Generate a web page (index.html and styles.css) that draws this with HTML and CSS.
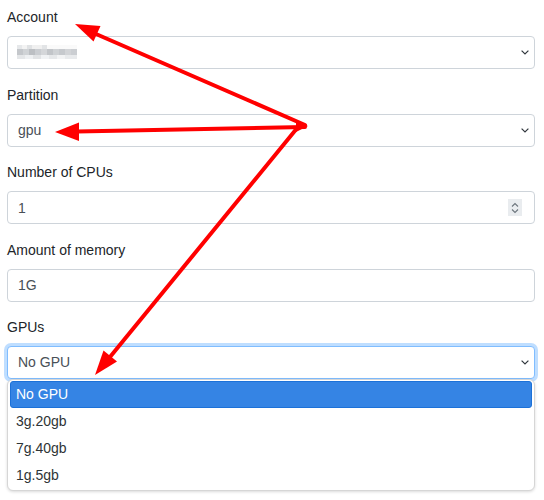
FILE: index.html
```html
<!DOCTYPE html>
<html lang="en">
<head>
    <meta charset="UTF-8">
    <meta name="viewport" content="width=device-width, initial-scale=1.0">
    <title>Job resources</title>
    <link rel="stylesheet" href="styles.css">
</head>
<body>
    <form class="job-form">
        <div class="form-group">
            <label for="account">Account</label>
            <div class="select-wrap">
                <select id="account" class="form-control">
                    <option value=""></option>
                </select>
                <!-- account name is blurred out -->
                <div class="redact"></div>
            </div>
        </div>

        <div class="form-group">
            <label for="partition">Partition</label>
            <select id="partition" class="form-control">
                <option>gpu</option>
            </select>
        </div>

        <div class="form-group">
            <label for="cpus">Number of CPUs</label>
            <div class="number-wrap">
                <input type="text" id="cpus" class="form-control" value="1">
                <span class="spinner">
                    <svg width="8" height="14" viewBox="0 0 8 14">
                        <path d="M1 5.5 4 2.5 7 5.5M1 8.5 4 11.5 7 8.5" fill="none" stroke="#6c757d" stroke-width="1.1"/>
                    </svg>
                </span>
            </div>
        </div>

        <div class="form-group">
            <label for="memory">Amount of memory</label>
            <input type="text" id="memory" class="form-control" value="1G">
        </div>

        <div class="form-group">
            <label for="gpus">GPUs</label>
            <div class="select-wrap">
                <select id="gpus" class="form-control is-open">
                    <option>No GPU</option>
                    <option>3g.20gb</option>
                    <option>7g.40gb</option>
                    <option>1g.5gb</option>
                </select>
                <ul class="dropdown">
                    <li class="active">No GPU</li>
                    <li>3g.20gb</li>
                    <li>7g.40gb</li>
                    <li>1g.5gb</li>
                </ul>
            </div>
        </div>
    </form>

    <!-- annotation arrows -->
    <svg class="arrows" width="544" height="500" viewBox="0 0 544 500">
        <g stroke="#ff0000" stroke-width="4" stroke-linecap="round">
            <line x1="305" y1="125" x2="96" y2="34"/>
            <line x1="305" y1="127" x2="77" y2="131.5"/>
            <line x1="298" y1="127" x2="110" y2="357"/>
        </g>
        <g fill="#ff0000">
            <polygon points="75,24 100.5,26 93.5,41.5"/>
            <polygon points="55,132 79,122.5 79,141"/>
            <polygon points="95,375 117,361.5 103.5,350.5"/>
            <polygon points="296,121 308,126 296,132"/>
        </g>
    </svg>
</body>
</html>
```

FILE: styles.css
```css
* {
    margin: 0;
    padding: 0;
    box-sizing: border-box;
}

html, body {
    min-height: 100vh;
}

body {
    font-family: "Liberation Sans", Arial, sans-serif;
    font-size: 14px;
    line-height: 21px;
    color: #212529;
    background-color: #fff;
    position: relative;
}

.job-form {
    padding: 7px 9px 0 7px;
}

.form-group {
    margin-bottom: 15.5px;
}

label {
    display: block;
    margin-bottom: 8px;
}

.form-control {
    display: block;
    width: 100%;
    height: 33px;
    padding: 5px 10px;
    font-family: inherit;
    font-size: 14px;
    line-height: 21px;
    color: #495057;
    background-color: #fff;
    border: 1px solid #ced4da;
    border-radius: 4px;
    outline: none;
}

select.form-control {
    appearance: none;
    background-image: url("data:image/svg+xml,%3csvg xmlns='http://www.w3.org/2000/svg' width='8' height='5' viewBox='0 0 8 5'%3e%3cpath d='M.6.6 4 4 7.4.6' fill='none' stroke='%23343a40' stroke-width='1.2'/%3e%3c/svg%3e");
    background-repeat: no-repeat;
    background-position: right 5px center;
    background-size: 8px 5px;
}

select.is-open {
    border-color: #80bdff;
    box-shadow: 0 0 0 3px rgba(0, 123, 255, 0.25);
}

.select-wrap,
.number-wrap {
    position: relative;
}

.redact {
    position: absolute;
    left: 10px;
    top: 9px;
    width: 60px;
    height: 14px;
    background:
        linear-gradient(90deg, #e6e8ea 0 5px, #f3f3f3 5px 10px, #e0e2e4 10px 15px, #f0f0f0 15px 25px, #e2e4e6 25px 30px, #fafafa 30px 60px) 0 0 / 100% 4px no-repeat,
        linear-gradient(90deg, #c4c7cb 0 6px, #d0d3d6 6px 12px, #bcbfc3 12px 18px, #cacdd1 18px 24px, #d4d6d9 24px 30px, #c2c5c9 30px 36px, #cfd2d5 36px 42px, #c6c9cd 42px 48px, #d2d4d7 48px 54px, #cbced2 54px 60px) 0 4px / 100% 6px no-repeat,
        linear-gradient(90deg, #e4e6e8 0 8px, #eef0f2 8px 16px, #e1e3e5 16px 24px, #f0f2f4 24px 32px, #e6e8ea 32px 40px, #f2f3f4 40px 48px, #e8eaec 48px 60px) 0 10px / 100% 4px no-repeat;
}

.spinner {
    position: absolute;
    right: 13px;
    top: 8px;
    width: 14px;
    height: 17px;
    background-color: #e9ecef;
    display: flex;
    align-items: center;
    justify-content: center;
}

.dropdown {
    position: absolute;
    left: 0;
    right: 0;
    top: 33px;
    list-style: none;
    background-color: #fff;
    border: 1px solid #d6d6d6;
    border-radius: 6px;
    box-shadow: 0 1px 3px rgba(0, 0, 0, 0.15);
    padding: 1px 0 1px;
}

.dropdown li {
    height: 27px;
    line-height: 25px;
    margin: 0 2px;
    padding: 0 5px;
    border: 1px solid transparent;
    border-radius: 3px;
    color: #2e3436;
}

.dropdown li.active {
    background-color: #3584e4;
    border-color: #1c71d8;
    color: #fff;
}

.arrows {
    position: absolute;
    top: 0;
    left: 0;
    pointer-events: none;
}
```
